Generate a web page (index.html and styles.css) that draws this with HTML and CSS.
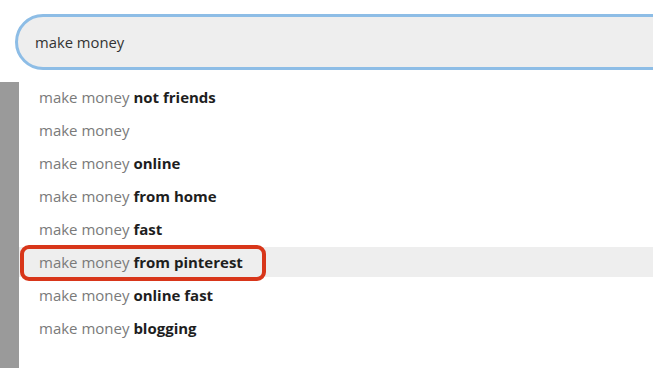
FILE: index.html
```html
<!DOCTYPE html>
<html>
<head>
<meta charset="utf-8">
<link rel="stylesheet" href="styles.css">
</head>
<body>
<div class="page">
  <div class="search">
    <div class="search-box">make money</div>
  </div>
  <div class="results">
    <div class="side"></div>
    <ul class="list">
      <li class="row"><span class="q">make money</span> <b>not friends</b></li>
      <li class="row"><span class="q">make money</span></li>
      <li class="row"><span class="q">make money</span> <b>online</b></li>
      <li class="row"><span class="q">make money</span> <b>from home</b></li>
      <li class="row"><span class="q">make money</span> <b>fast</b></li>
      <li class="row active"><span class="q">make money</span> <b>from pinterest</b><span class="mark"></span></li>
      <li class="row"><span class="q">make money</span> <b>online fast</b></li>
      <li class="row"><span class="q">make money</span> <b>blogging</b></li>
    </ul>
  </div>
</div>
</body>
</html>
```

FILE: styles.css
```css
html, body {
  margin: 0;
  padding: 0;
  background: #fff;
  overflow: hidden;
}
.page {
  width: 653px;
  height: 368px;
  overflow: hidden;
  font-family: "Open Sans", "Noto Sans", sans-serif;
}
.search {
  padding: 14px 0 0 15px;
  height: 82px;
  box-sizing: border-box;
}
.search-box {
  width: 700px;
  height: 56px;
  box-sizing: border-box;
  border: 3px solid #8dbde6;
  border-radius: 28px;
  background: #eeeeee;
  padding-left: 17px;
  display: flex;
  align-items: center;
  font-size: 14.8px;
  color: #333;
}
.results {
  display: flex;
  height: 286px;
}
.side {
  width: 19px;
  background: #9a9a9a;
  flex: none;
}
.list {
  list-style: none;
  margin: 0;
  padding: 0;
  flex: 1;
  display: flex;
  flex-direction: column;
  gap: 3px;
}
.row {
  position: relative;
  height: 30px;
  line-height: 30px;
  padding-left: 20px;
  font-size: 15px;
  white-space: nowrap;
}
.row .q {
  color: #7a7a7a;
}
.row b {
  color: #1e1e1e;
  font-weight: 700;
}
.row.active {
  background: #eeeeee;
}
.mark {
  position: absolute;
  left: 1px;
  top: -2px;
  width: 246px;
  height: 36px;
  box-sizing: border-box;
  border: 4px solid #d8361a;
  border-radius: 9px;
}
```
